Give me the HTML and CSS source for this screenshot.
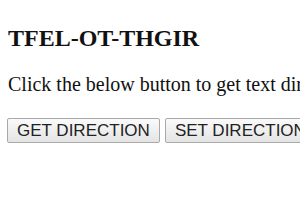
FILE: index.html
```html
<!DOCTYPE html>
<html lang="en">
<head>
    <meta charset="UTF-8">
    <title>Direction</title>
    <link rel="stylesheet" href="styles.css">
</head>
<body>
    <h3 class="title">TFEL-OT-THGIR</h3>
    <p class="note">Click the below button to get text direction</p>
    <div class="actions">
        <button class="btn" onclick="getDirection()">GET DIRECTION</button>
        <button class="btn" onclick="setDirection()">SET DIRECTION</button>
    </div>
    <script>
        function getDirection() {
            alert(document.querySelector('.title').style.direction || 'ltr');
        }
        function setDirection() {
            document.querySelector('.title').style.direction = 'rtl';
        }
    </script>
</body>
</html>
```

FILE: styles.css
```css
body {
    margin: 0;
    padding: 0 8px;
    font-family: "Liberation Serif", "Times New Roman", serif;
    color: #111;
    background: #fff;
    white-space: nowrap;
    overflow: hidden;
}

.title {
    font-size: 24px;
    font-weight: bold;
    margin: 26px 0 0;
    line-height: 24px;
}

.note {
    font-size: 20px;
    margin: 23px 0 0;
    line-height: 22px;
}

.actions {
    display: flex;
    gap: 5px;
    margin: 23px 0 0 -1px;
}

.btn {
    height: 25px;
    padding: 0 9px;
    font-family: "Liberation Sans", Arial, sans-serif;
    font-size: 17px;
    color: #222;
    background: linear-gradient(#fafafa, #e4e4e4);
    border: 1px solid #a9a9a9;
    border-radius: 2px;
    flex-shrink: 0;
}
```
